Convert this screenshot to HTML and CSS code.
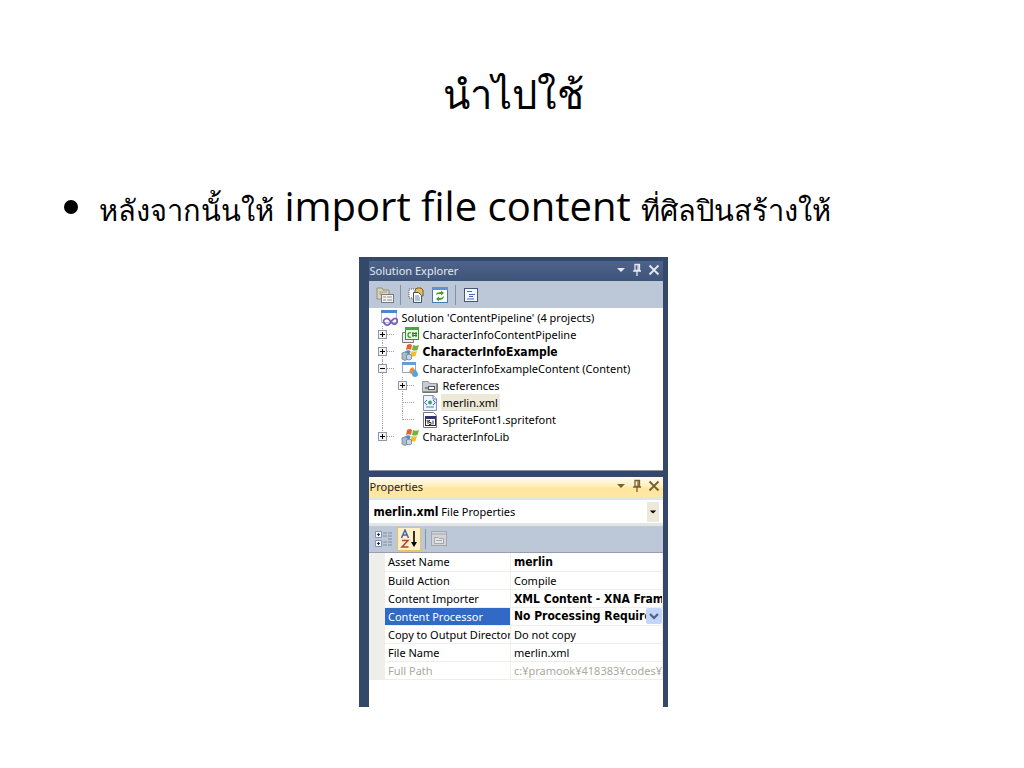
FILE: index.html
```html
<!DOCTYPE html>
<html lang="th">
<head>
    <meta charset="UTF-8">
    <meta name="viewport" content="width=device-width, initial-scale=1.0">
    <title>นำไปใช้</title>
    <link rel="stylesheet" href="styles.css">
</head>
<body>
    <!-- shared icons -->
    <svg class="defs" aria-hidden="true">
        <symbol id="i-menu" viewBox="0 0 10 10"><path d="M1 3h8L5 7z" fill="currentColor"/></symbol>
        <symbol id="i-pin" viewBox="0 0 10 14"><path d="M3 1.500h4.500v6H3zM6 1.500v6M1 8h8M5 8v5" fill="none" stroke="currentColor" stroke-width="1.300"/></symbol>
        <symbol id="i-close" viewBox="0 0 12 12"><path d="M1.500 1.500l9 9M10.500 1.500l-9 9" stroke="currentColor" stroke-width="1.800"/></symbol>
        <symbol id="i-game" viewBox="0 0 18 18">
            <path d="M6 2q3-2 5 0l-1 5q-2-1.500-5 0z" fill="#e8632c"/>
            <path d="M12 2q3 1.500 6 0l-1.500 5q-3 1-5.500 0z" fill="#6fb43c"/>
            <path d="M4.500 8q3-1.500 5 0l-1 5q-3-1-5 0z" fill="#4c8fd6"/>
            <path d="M10.500 8q3 1 5.500 0l-1.500 5q-3 1-5 0z" fill="#f5bd2c"/>
            <path d="M1 10l3-1 3 1v6l-3 1.500L1 16z" fill="#a9bccb" stroke="#6a8296" stroke-width=".8"/>
            <path d="M5.500 12l2.500-1 2.500 1v4l-2.500 1-2.500-1z" fill="#c9d7e0" stroke="#6a8296" stroke-width=".8"/>
        </symbol>
    </svg>

    <main class="slide">
        <h1>นำไปใช้</h1>
        <ul class="points">
            <li><span class="thai">หลังจากนั้นให้</span> <span lang="en">import file content</span> <span class="thai">ที่ศิลปินสร้างให้</span></li>
        </ul>

        <div class="ide" lang="en">
            <section class="panel explorer">
                <header class="titlebar">
                    <h2>Solution Explorer</h2>
                    <button aria-label="Window position"><svg width="10" height="10"><use href="#i-menu"/></svg></button>
                    <button aria-label="Auto hide"><svg width="10" height="14"><use href="#i-pin"/></svg></button>
                    <button aria-label="Close"><svg width="12" height="12"><use href="#i-close"/></svg></button>
                </header>
                <div class="toolbar">
                    <button aria-label="Properties">
                        <svg width="18" height="18" viewBox="0 0 18 18"><path d="M1 2h5l1 2h6v9H1z" fill="#ddd6bd" stroke="#928d7d"/><path d="M3 6h8M3 8h3" stroke="#9b9788"/><rect x="5.500" y="8.500" width="12" height="8" fill="#f4f4f2" stroke="#777b80"/><path d="M7 11h3M7 14h3M11 11h5M11 14h5" stroke="#858a91"/></svg>
                    </button>
                    <span class="sep"></span>
                    <button aria-label="Show all files">
                        <svg width="18" height="18" viewBox="0 0 18 18"><path d="M2 3h7v9H2z" fill="#fff" stroke="#555" stroke-dasharray="1 1"/><path d="M8 4l2-2h4l2 2v6H8z" fill="#e8bd55" stroke="#6b5a38"/><path d="M6.500 6.500h5l3 3v7h-8z" fill="#fff" stroke="#42526e"/><path d="M8 10h4M8 12h5M8 14h5" stroke="#6384ba"/></svg>
                    </button>
                    <button aria-label="Refresh">
                        <svg width="18" height="18" viewBox="0 0 18 18"><rect x="1.500" y="1.500" width="15" height="15" fill="#fff" stroke="#4d78ba"/><path d="M1 1h16v3H1z" fill="#5b91df"/><path d="M5 9q0-3 5-3V4.500L13 7l-3 2.500V8q-3-.5-5 1zM13 10q0 4-5 4v1.500L5 13l3-2.500V12q3 .5 5-2z" fill="#4a9c2c"/></svg>
                    </button>
                    <span class="sep"></span>
                    <button aria-label="View class diagram">
                        <svg width="18" height="18" viewBox="0 0 18 18"><rect x="2.500" y="2.500" width="13" height="13" fill="#f4f8ff" stroke="#465776"/><path d="M5 5.500h5M7 8.500h6M7 10.500h4M5 13h7" stroke="#476bc0"/></svg>
                    </button>
                </div>
                <ul class="tree">
                    <li>
                        <div class="node root">
                            <svg class="icon" width="18" height="18" viewBox="0 0 18 18"><path d="M1.500 1.500h15v12h-15z" fill="#fff" stroke="#a3bfe0"/><path d="M1 1h16v3H1z" fill="#4c86da"/><path d="M11 13q-3-5-6-3t0 5 6-2q3-5 5.500-3t-1 5q-2 1-4.500-2z" fill="none" stroke="#7a5fb5" stroke-width="1.800"/></svg>
                            <span class="name">Solution 'ContentPipeline' (4 projects)</span>
                        </div>
                        <ul class="branch">
                            <li>
                                <div class="node">
                                    <button class="toggle" aria-label="Expand"></button>
                                    <svg class="icon" width="18" height="18" viewBox="0 0 18 18"><path d="M1.500 6.500h11v10h-11z" fill="#eee" stroke="#777"/><rect x="4.500" y="1.500" width="13" height="12" fill="#e9f8df" stroke="#339231"/><path d="M4 1h14v3H4z" fill="#44aa3f"/><path d="M10 7q-3-1-3 2t3 2M12 6v5M15 6v5M11 7.500h5M11 9.500h5" fill="none" stroke="#248525" stroke-width="1.200"/></svg>
                                    <span class="name">CharacterInfoContentPipeline</span>
                                </div>
                            </li>
                            <li>
                                <div class="node">
                                    <button class="toggle" aria-label="Expand"></button>
                                    <svg class="icon" width="18" height="18"><use href="#i-game"/></svg>
                                    <b class="name">CharacterInfoExample</b>
                                </div>
                            </li>
                            <li>
                                <div class="node">
                                    <button class="toggle open" aria-label="Collapse"></button>
                                    <svg class="icon" width="18" height="18" viewBox="0 0 18 18"><rect x="1.500" y="2.500" width="13" height="10" fill="#fff" stroke="#95acc8"/><path d="M1 2h14v3H1z" fill="#649be3"/><path d="M9 9l3-2 2 4-3 3-3-1z" fill="#ed8a3a"/><path d="M14 9q6 7 0 8-6-1 0-8z" fill="#4ba5e6"/></svg>
                                    <span class="name">CharacterInfoExampleContent (Content)</span>
                                </div>
                                <ul class="branch">
                                    <li>
                                        <div class="node">
                                            <button class="toggle" aria-label="Expand"></button>
                                            <svg class="icon" width="18" height="18" viewBox="0 0 18 18"><path d="M1.500 4.500h6l1 2h8v9h-15z" fill="#c7ccd2" stroke="#92979d"/><path d="M2 15h14V7" fill="none" stroke="#555"/><rect x="7.500" y="9.500" width="6" height="3" fill="#fff" stroke="#555"/><path d="M4 11h3" stroke="#444"/></svg>
                                            <span class="name">References</span>
                                        </div>
                                    </li>
                                    <li>
                                        <div class="node">
                                            <svg class="icon" width="18" height="18" viewBox="0 0 18 18"><path d="M2.500 1.500h10l3 3v12h-13z" fill="#eef5ff" stroke="#7893ba"/><path d="M12 1v4h4" fill="#fff" stroke="#647ea5"/><path d="M6 6L3.500 8.500 6 11M12 6l2.500 2.500L12 11" fill="none" stroke="#345fa5"/><circle cx="9" cy="8.500" r="2" fill="#4a9d70"/><path d="M5 13h8" stroke="#577bbb"/></svg>
                                            <span class="name selected">merlin.xml</span>
                                        </div>
                                    </li>
                                    <li>
                                        <div class="node">
                                            <svg class="icon" width="18" height="18" viewBox="0 0 18 18"><path d="M2.500 1.500h10l3 3v12h-13z" fill="#fff" stroke="#777"/><rect x="4.500" y="5.500" width="10" height="9" fill="#fff" stroke="#25284e"/><path d="M4 5h11v3H4z" fill="#30366b"/><path d="M7 9v4M5.500 10H7M9 9.500h-1v2h2v2H8M12 9.500v4" fill="none" stroke="#333"/></svg>
                                            <span class="name">SpriteFont1.spritefont</span>
                                        </div>
                                    </li>
                                </ul>
                            </li>
                            <li>
                                <div class="node">
                                    <button class="toggle" aria-label="Expand"></button>
                                    <svg class="icon" width="18" height="18"><use href="#i-game"/></svg>
                                    <span class="name">CharacterInfoLib</span>
                                </div>
                            </li>
                        </ul>
                    </li>
                </ul>
            </section>

            <section class="panel properties">
                <header class="titlebar active">
                    <h2>Properties</h2>
                    <button aria-label="Window position"><svg width="10" height="10"><use href="#i-menu"/></svg></button>
                    <button aria-label="Auto hide"><svg width="10" height="14"><use href="#i-pin"/></svg></button>
                    <button aria-label="Close"><svg width="12" height="12"><use href="#i-close"/></svg></button>
                </header>
                <div class="object">
                    <label for="object"><b>merlin.xml</b> File Properties</label>
                    <div class="drop">
                        <select id="object"><option value="merlin" label=" "></option></select>
                        <svg width="8" height="8"><use href="#i-menu"/></svg>
                    </div>
                </div>
                <div class="toolbar">
                    <button aria-label="Categorized">
                        <svg width="18" height="18" viewBox="0 0 18 18"><path d="M.5 1.500h6v6h-6zM.5 10.500h6v6h-6z" fill="#f5f7fb" stroke="#8295b5"/><path d="M2 4.500h3M3.500 3v3M2 13.500h3M3.500 12v3" stroke="#172d62"/><path d="M8 3h4M8 6h4M8 12h4M8 15h4M13 3h4M13 6h4M13 9h4M13 12h4M13 15h4" stroke="#7e8ca1"/></svg>
                    </button>
                    <button class="on" aria-label="Alphabetical">
                        <svg width="20" height="20" viewBox="0 0 20 20"><path d="M2.500 9L6 1l3.500 8M4 6h4" fill="none" stroke="#4866ae" stroke-width="1.500"/><path d="M3 11.500h6L3 18h6.500" fill="none" stroke="#b2433c" stroke-width="1.500"/><path d="M15 2v14" stroke="#000" stroke-width="1.600"/><path d="M12 13h6l-3 5z"/></svg>
                    </button>
                    <span class="sep"></span>
                    <button aria-label="Property pages" disabled>
                        <svg width="18" height="18" viewBox="0 0 18 18"><rect x="1.500" y="1.500" width="15" height="14" fill="#d2d5d8" stroke="#a4a7aa"/><path d="M1 4h16" stroke="#a4a7aa"/><path d="M4.500 7.500h4l1 1h4v5h-9z" fill="#e5e6e7" stroke="#a4a7aa"/><path d="M6 10.500h6" stroke="#a4a7aa"/></svg>
                    </button>
                </div>
                <table class="grid">
                    <colgroup><col class="gutter"><col class="key"><col></colgroup>
                    <tbody>
                        <tr><td></td><th scope="row">Asset Name</th><td><b>merlin</b></td></tr>
                        <tr><td></td><th scope="row">Build Action</th><td>Compile</td></tr>
                        <tr><td></td><th scope="row">Content Importer</th><td><b>XML Content - XNA Framework</b></td></tr>
                        <tr class="current">
                            <td></td>
                            <th scope="row"><label for="processor">Content Processor</label></th>
                            <td>
                                <div class="editor">
                                    <select id="processor"><option>No Processing Required</option></select>
                                    <svg width="16" height="16" viewBox="0 0 16 16"><rect width="16" height="16" rx="2" fill="#c3d5fb"/><path d="M4 6l4 4 4-4" fill="none" stroke="#4d6185" stroke-width="2.200"/></svg>
                                </div>
                            </td>
                        </tr>
                        <tr><td></td><th scope="row">Copy to Output Directory</th><td>Do not copy</td></tr>
                        <tr><td></td><th scope="row">File Name</th><td>merlin.xml</td></tr>
                        <tr class="readonly"><td></td><th scope="row">Full Path</th><td>c:¥pramook¥418383¥codes¥</td></tr>
                    </tbody>
                </table>
            </section>
        </div>
    </main>
</body>
</html>
```
FILE: styles.css
```css
* {
    box-sizing: border-box;
}
body {
    margin: 0;
    background: #fff;
    color: #000;
    font-family: "Open Sans", sans-serif;
}
.defs {
    display: none;
}
.slide {
    padding: 58px 51px 60px 53px;
}
h1 {
    margin: 0;
    font-size: 40px;
    font-weight: 300;
    line-height: 72px;
    text-align: center;
}
.points {
    margin: 44px 0 0;
    padding-left: 46px;
    font-size: 40px;
    line-height: 64px;
}
.thai {
    font-size: 29px;
    font-weight: 300;
}

/* Visual Studio window */
.ide {
    width: 100%;
    max-width: 309px;
    margin: 15px auto 0;
    padding: 4px 5px 0 10px;
    background: #34496a;
    font-family: "Noto Sans", Tahoma, sans-serif;
    font-size: 11px;
    line-height: 17px;
}
.ide b,
.editor select {
    font-family: "DejaVu Sans Condensed", Tahoma, sans-serif;
    font-size: 12px;
    font-weight: 700;
    line-height: 16px;
}
.ide button {
    display: flex;
    align-items: center;
    justify-content: center;
    padding: 0;
    border: 0;
    background: none;
    color: inherit;
}
.titlebar {
    display: flex;
    align-items: center;
    gap: 6px;
    height: 20px;
    padding: 0 3px 2px 1px;
    background: linear-gradient(#4e6389, #3e5479);
    color: #e4e9f2;
}
.titlebar.active {
    border-radius: 2px 2px 0 0;
    background: linear-gradient(#fffbee, #fff0c1 45%, #ffe69d 55%, #ffe8a6);
    color: #75612f;
}
.titlebar h2 {
    flex: 1;
    margin: 0;
    font-size: 11px;
    font-weight: 400;
}
.titlebar.active h2 {
    color: #222;
}
.toolbar {
    display: flex;
    align-items: center;
    gap: 6px;
    height: 27px;
    padding: 0 7px;
    background: #bcc7d8;
}
.sep {
    width: 1px;
    height: 20px;
    background: #8591a8;
}

/* solution tree */
.tree {
    height: 163px;
    margin: 0;
    padding: 1px 0 0 9px;
    border-bottom: 1px solid #8b9099;
    background: #fff;
    list-style: none;
}
.branch {
    margin: 0;
    padding: 0;
    list-style: none;
}
.branch .branch {
    padding-left: 20px;
}
.branch > li {
    position: relative;
}
.branch > li::before {
    content: "";
    position: absolute;
    top: 0;
    bottom: 0;
    left: 4px;
    border-left: 1px dotted #a0a0a0;
}
.branch > li:last-child::before {
    bottom: auto;
    height: 9px;
}
.node {
    display: flex;
    align-items: center;
    height: 17px;
    padding-left: 23px;
}
.node.root {
    padding-left: 2px;
}
.branch .node::before {
    content: "";
    position: absolute;
    top: 8px;
    left: 5px;
    width: 11px;
    border-top: 1px dotted #a0a0a0;
}
.icon {
    flex: none;
    margin-right: 2px;
}
.name {
    padding: 0 2px;
    white-space: nowrap;
}
.selected {
    background: #ece9d8;
}
.ide .toggle {
    position: absolute;
    top: 4px;
    left: 0;
    width: 9px;
    height: 9px;
    border: 1px solid #8c98a9;
    background: linear-gradient(#000, #000) center / 5px 1px no-repeat, linear-gradient(#000, #000) center / 1px 5px no-repeat, #f4f4f0;
}
.ide .toggle.open {
    background: linear-gradient(#000, #000) center / 5px 1px no-repeat, #f4f4f0;
}

/* properties */
.properties {
    height: 230px;
    margin-top: 6px;
    background: #fff;
}
.object {
    display: flex;
    align-items: center;
    height: 29px;
    padding: 0 4px 0 5px;
    border: solid #e3e4e4;
    border-width: 3px 0;
    background: #fff;
}
.object label {
    flex: 1;
}
.drop {
    display: flex;
    align-items: center;
    justify-content: center;
    position: relative;
    width: 12px;
    height: 20px;
    background: #ece9d8;
}
.drop select {
    position: absolute;
    inset: 0;
    width: 100%;
    border: 0;
    background: none;
    appearance: none;
}
.drop svg {
    position: relative;
    pointer-events: none;
}
.properties .toolbar {
    gap: 4px;
    padding: 0 6px;
    border-bottom: 1px solid #979fac;
}
.toolbar .on {
    width: 24px;
    height: 24px;
    border: 1px solid #e5c365;
    background: #fff0c8;
}
.grid {
    width: 100%;
    table-layout: fixed;
    border-collapse: collapse;
}
.gutter {
    width: 16px;
}
.key {
    width: 126px;
}
.grid td,
.grid th {
    height: 18px;
    padding: 0 0 0 3px;
    border: solid #eeeeea;
    border-width: 0 1px 1px 0;
    font-weight: 400;
    text-align: left;
    white-space: nowrap;
    overflow: hidden;
}
.grid td:first-child {
    border-color: #eeeeea;
    background: #eeeeea;
}
.current th {
    background: #316ac5;
    color: #fff;
}
.readonly {
    color: #aaa99c;
}
.editor {
    display: flex;
    align-items: center;
    height: 17px;
}
.editor select {
    flex: 1;
    min-width: 0;
    padding: 0;
    border: 0;
    background: none;
    color: #000;
    text-overflow: clip;
    appearance: none;
}
.editor svg {
    flex: none;
}
```
